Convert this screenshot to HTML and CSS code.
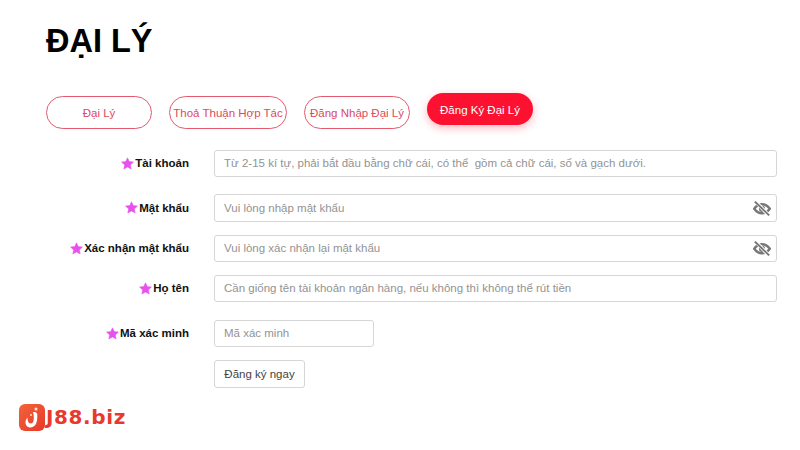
FILE: index.html
```html
<!DOCTYPE html>
<html lang="vi">
	<head>
		<meta charset="utf-8">
		<title>Đại Lý</title>
		<link rel="stylesheet" href="styles.css">
	</head>
	<body>
		<svg width="0" height="0" class="defs">
			<symbol id="star" viewBox="0 0 24 24">
				<path d="M12 1.500l3.200 7 7.800.9-5.800 5.200 1.600 7.600L12 18.400l-6.800 3.800 1.600-7.600L1 9.400l7.800-.9z" stroke-linejoin="round"/>
			</symbol>
			<symbol id="eye" viewBox="0 0 18 15">
				<path d="M1.200 7.800C3.400 4.800 6 3.300 9 3.300s5.600 1.500 7.800 4.500c-2.200 3-4.800 4.500-7.800 4.500s-5.600-1.500-7.800-4.500z" fill="none" stroke="currentColor" stroke-width="2.400"/>
				<circle cx="9" cy="7.800" r="3.100" fill="currentColor"/>
				<path d="M2.800 .8l12.400 13" stroke="#fff" stroke-width="3.600"/>
				<path d="M1.800 .6l14.400 13.800" stroke="currentColor" stroke-width="1.900"/>
			</symbol>
		</svg>

		<div class="page">
			<h1 class="title">ĐẠI LÝ</h1>

			<div class="tabs">
				<div class="tab">Đại Lý</div>
				<div class="tab">Thoả Thuận Hợp Tác</div>
				<div class="tab">Đăng Nhập Đại Lý</div>
				<div class="tab active">Đăng Ký Đại Lý</div>
			</div>

			<form class="form">
				<div class="row">
					<label class="label"><svg class="star"><use href="#star"/></svg>Tài khoản</label>
					<div class="field"><input class="input" type="text" placeholder="Từ 2-15 kí tự, phải bắt đầu bằng chữ cái, có thể  gồm cả chữ cái, số và gạch dưới."></div>
				</div>
				<div class="row row2">
					<label class="label"><svg class="star"><use href="#star"/></svg>Mật khẩu</label>
					<div class="field"><input class="input" type="text" placeholder="Vui lòng nhập mật khẩu"><svg class="eye"><use href="#eye"/></svg></div>
				</div>
				<div class="row row3">
					<label class="label"><svg class="star"><use href="#star"/></svg>Xác nhận mật khẩu</label>
					<div class="field"><input class="input" type="text" placeholder="Vui lòng xác nhận lại mật khẩu"><svg class="eye"><use href="#eye"/></svg></div>
				</div>
				<div class="row row3">
					<label class="label"><svg class="star"><use href="#star"/></svg>Họ tên</label>
					<div class="field"><input class="input" type="text" placeholder="Cần giống tên tài khoản ngân hàng, nếu không thì không thể rút tiền"></div>
				</div>
				<div class="row row5">
					<label class="label"><svg class="star"><use href="#star"/></svg>Mã xác minh</label>
					<div class="field short"><input class="input" type="text" placeholder="Mã xác minh"></div>
				</div>
				<div class="row row3">
					<div class="label"></div>
					<button class="submit" type="button">Đăng ký ngay</button>
				</div>
			</form>

			<div class="logo">
				<div class="logo-mark">
					<svg width="26" height="27" viewBox="0 0 26 27">
						<path d="M14 8c2.500 0 4.300.5 4.300 2.500 0 4-.1 6-.8 8-.9 2.800-2.900 5-6 5-3 0-5.200-2.200-5-5.500.1-1.500 1-3.500 2-4.500 0 2 .5 6 3.200 6 1.800 0 2.800-1.500 3-4 .2-2.500.1-5-.7-7.500z" fill="#fff"/>
						<circle cx="17" cy="5" r="1.500" fill="#ffe3d0"/>
						<circle cx="12" cy="11" r="1" fill="#ffe3d0"/>
					</svg>
				</div>
				<span class="logo-text">J88.biz</span>
			</div>
		</div>
	</body>
</html>
```

FILE: styles.css
```css
body{
	margin:0;
	background-color:#fff;
	font-family:"Liberation Sans", Arial, sans-serif;
	overflow:hidden;
}
.defs{
	display:block;
	height:0;
}
.page{
	width:800px;
	height:450px;
	padding-top:22px;
	box-sizing:border-box;
}
.title{
	margin:0 0 36px 46px;
	height:38px;
	font-size:32.500px;
	line-height:38px;
	font-weight:bold;
	color:#000;
}
.tabs{
	display:flex;
	align-items:flex-start;
	gap:17px;
	margin-left:46px;
	height:54px;
}
.tab{
	box-sizing:border-box;
	width:106px;
	height:33px;
	padding-top:1px;
	border:1px solid #e4596e;
	border-radius:17px;
	color:#dc4a60;
	font-size:11.500px;
	line-height:31px;
	text-align:center;
	white-space:nowrap;
	background-color:#fff;
}
.tab:nth-child(2){
	width:118px;
}
.active{
	margin-top:-3px;
	height:32px;
	padding-top:1px;
	border:0;
	background-color:#fc1230;
	color:#fff;
	line-height:32px;
	box-shadow:0 3px 8px rgba(252,18,48,.3);
}
.row{
	display:flex;
	align-items:center;
}
.row2{
	margin-top:17px;
}
.row3{
	margin-top:13px;
}
.row5{
	margin-top:18px;
}
.label{
	width:189px;
	flex-shrink:0;
	display:flex;
	align-items:center;
	justify-content:flex-end;
	gap:1px;
	padding-bottom:1px;
	font-size:11.500px;
	font-weight:bold;
	color:#111;
}
.star{
	width:13px;
	height:13px;
	fill:#e752ef;
	stroke:#e752ef;
}
.field{
	position:relative;
	margin-left:25px;
	width:563px;
}
.short{
	width:160px;
}
.input{
	display:block;
	box-sizing:border-box;
	width:100%;
	height:27px;
	padding:0 9px 1px;
	border:1px solid #d6d6d6;
	border-radius:3px;
	font-family:inherit;
	font-size:11.500px;
	color:#333;
	outline:none;
}
.row2 .input{
	height:28px;
}
.input::placeholder{
	color:#939393;
	opacity:1;
}
.eye{
	position:absolute;
	right:6px;
	top:7px;
	width:18px;
	height:15px;
	color:#777;
}
.row3 .eye{
	top:6px;
}
.submit{
	margin-left:25px;
	box-sizing:border-box;
	width:91px;
	height:28px;
	padding:0;
	border:1px solid #d6d6d6;
	border-radius:3px;
	background-color:#fff;
	font-family:inherit;
	font-size:11.500px;
	color:#444;
}
.logo{
	display:flex;
	align-items:center;
	margin:16px 0 0 19px;
}
.logo-mark{
	width:26px;
	height:27px;
	border-radius:6px;
	background:linear-gradient(135deg,#f2643a,#e8392a);
}
.logo-text{
	margin-left:1px;
	font-family:"DejaVu Sans", sans-serif;
	font-size:20px;
	letter-spacing:.6px;
	line-height:27px;
	font-weight:bold;
	color:#e8392f;
}
```
